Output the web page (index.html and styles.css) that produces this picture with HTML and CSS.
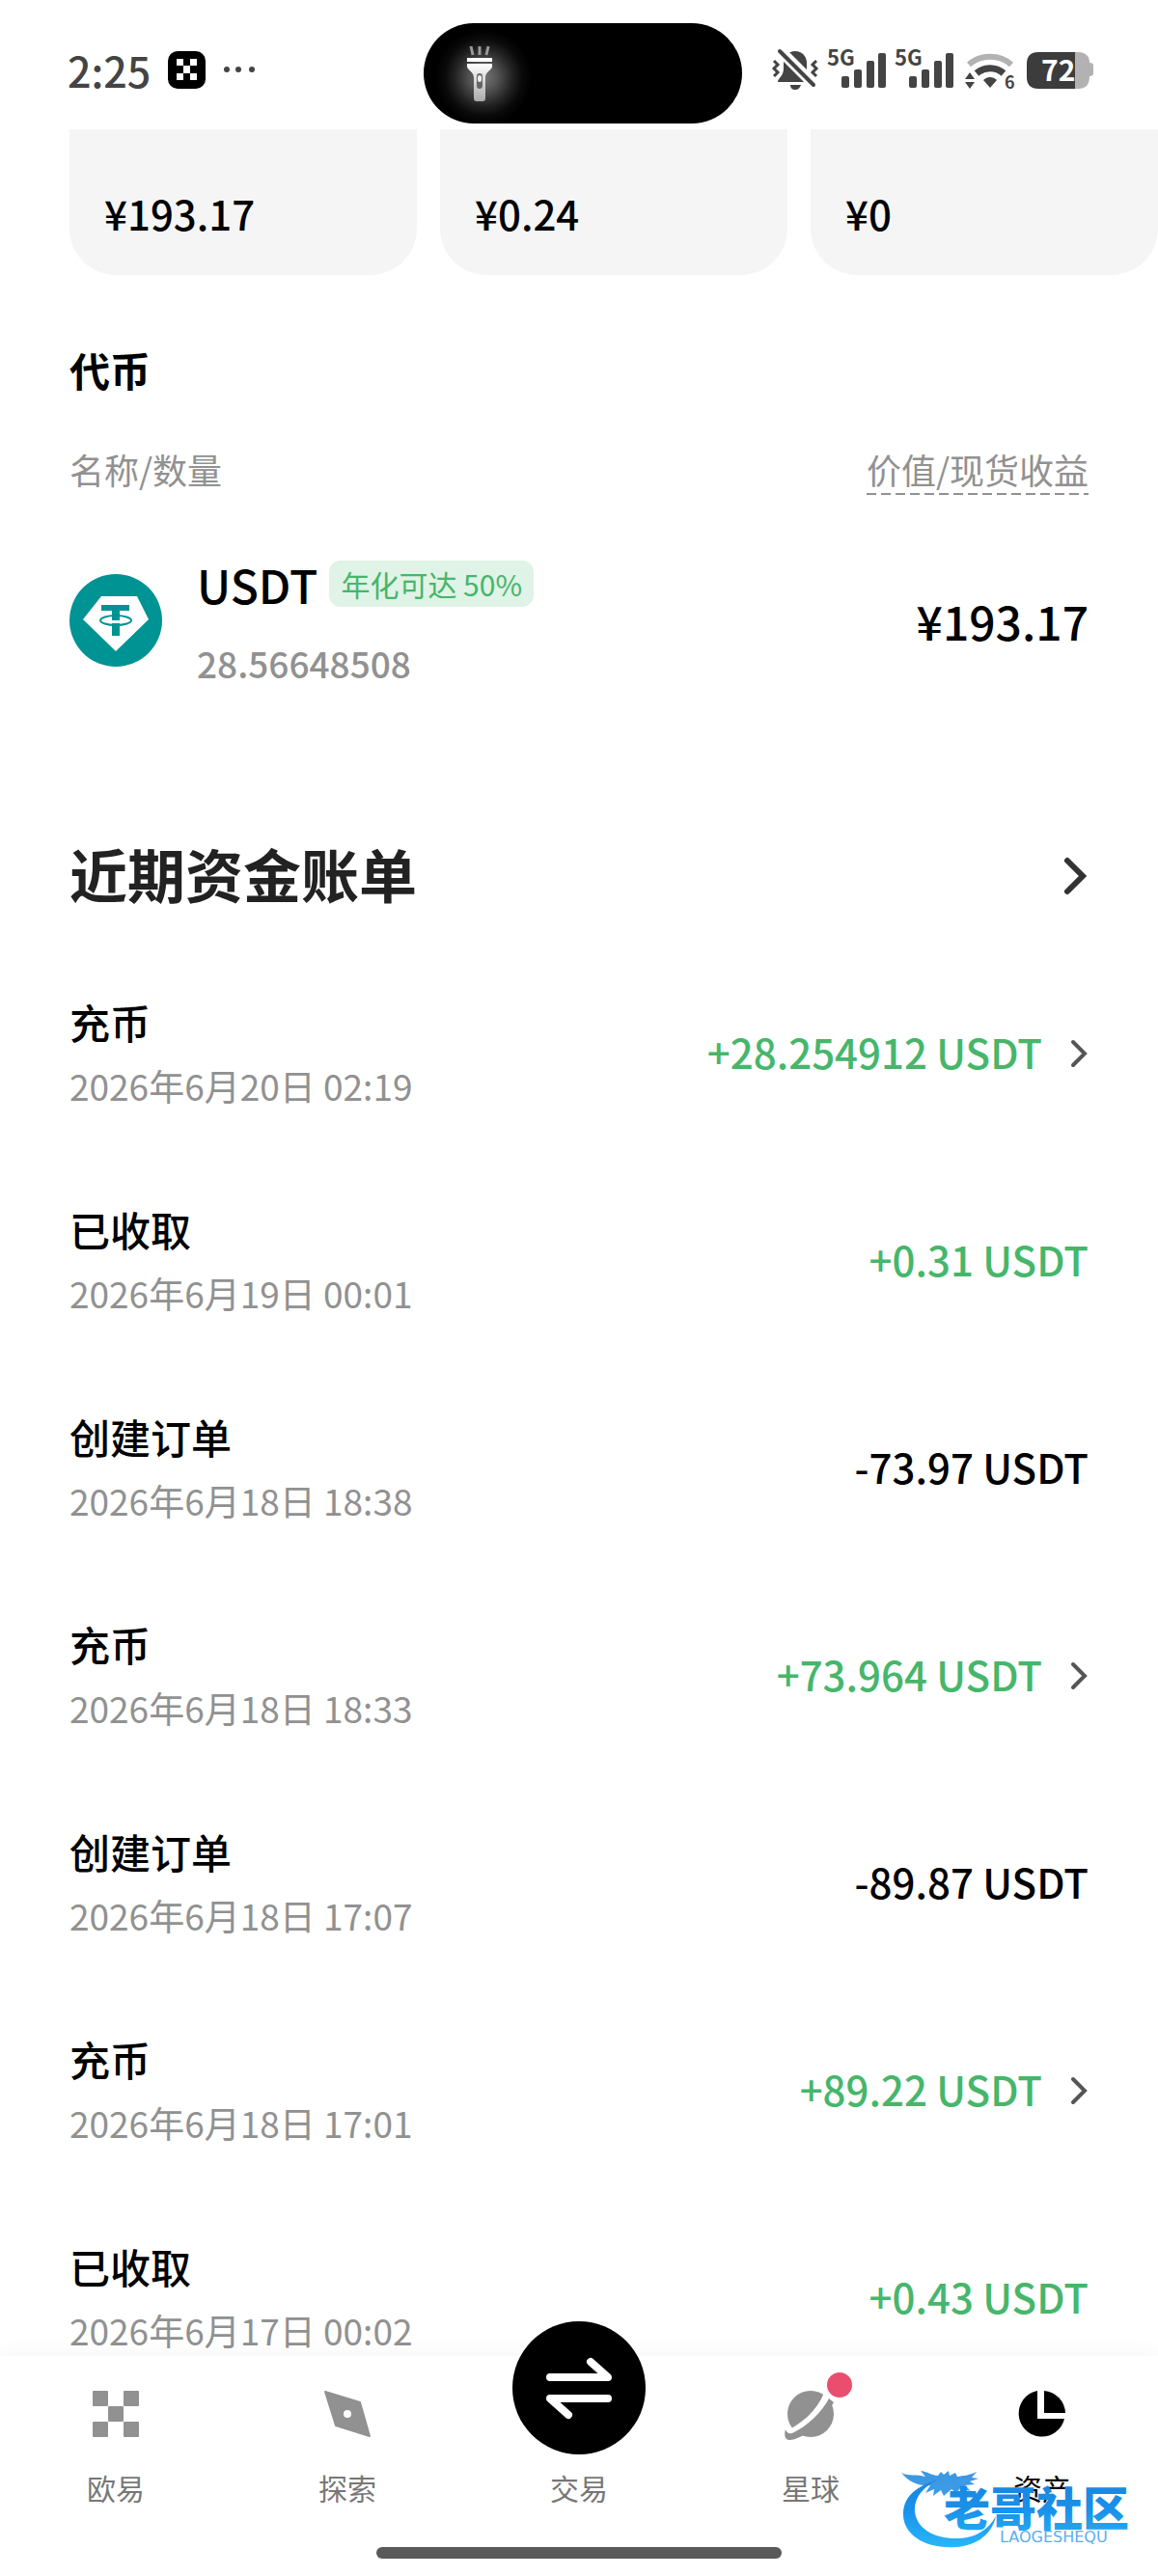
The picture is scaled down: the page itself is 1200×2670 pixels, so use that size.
FILE: index.html
```html
<!DOCTYPE html>
<html lang="zh-CN">
<head>
  <meta charset="UTF-8">
  <meta name="viewport" content="width=device-width, initial-scale=1">
  <title>资产</title>
  <link rel="stylesheet" href="styles.css">
</head>
<body>
  <div class="app">

    <header class="status-bar">
      <div class="status-left">
        <span class="time">2:25</span>
        <svg class="app-icon" width="39" height="39" viewBox="0 0 39 39">
          <rect width="39" height="39" rx="10" fill="#000"/>
          <path d="M9 8h7v7H9zM23 8h7v7h-7zM16 15h7v8h-7zM9 23h7v7H9zM23 23h7v7h-7z" fill="#fff"/>
        </svg>
        <svg width="34" height="8" viewBox="0 0 34 8" fill="#444">
          <circle cx="4" cy="4" r="3"/><circle cx="16" cy="4" r="3"/><circle cx="30" cy="4" r="3"/>
        </svg>
      </div>

      <div class="island">
        <svg width="26" height="60" viewBox="0 0 26 60">
          <defs>
            <linearGradient id="torch" x1="0" y1="0" x2="0" y2="1">
              <stop offset="0" stop-color="#fff"/><stop offset="1" stop-color="#aaa"/>
            </linearGradient>
          </defs>
          <path d="M4 2l2 9M13 2v9M22 2l-2 9" stroke="#999" stroke-width="3"/>
          <path d="M0 14h26v4H0z" fill="#fff"/>
          <path d="M0 20h26v3c0 3-7 6-7 11v22c0 2-1 3-3 3h-6c-2 0-3-1-3-3V34c0-5-7-8-7-11z" fill="url(#torch)"/>
          <rect x="10" y="30" width="6" height="16" rx="3" fill="#666"/>
          <rect x="11" y="32" width="4" height="7" rx="2" fill="#eee"/>
        </svg>
      </div>

      <div class="status-right">
        <svg width="48" height="42" viewBox="0 0 48 42">
          <path d="M24 2c7 0 12 5 12 12v6c0 7 6 10 6 14H6c0-4 6-6 6-14v-6C12 7 17 2 24 2z" fill="#444"/>
          <path d="M18 37h12c-1 3-3 5-6 5s-5-2-5-5z" fill="#444"/>
          <path d="M4 -3l42 42" stroke="#fff" stroke-width="11"/>
          <path d="M8 2l35 35" stroke="#444" stroke-width="4" stroke-linecap="round"/>
          <path d="M2 12l4 4-4 4 4 4-4 4M46 12l-4 4 4 4-4 4 4 4" fill="none" stroke="#444" stroke-width="3"/>
        </svg>
        <svg width="61" height="42" viewBox="0 0 61 42" fill="#444">
          <text class="net" x="0" y="17">5G</text>
          <rect x="15" y="28" width="8" height="12" rx="2"/>
          <rect x="28" y="21" width="8" height="19" rx="2"/>
          <rect x="41" y="12" width="8" height="28" rx="2"/>
          <rect x="53" y="4" width="8" height="36" rx="2"/>
        </svg>
        <svg width="61" height="42" viewBox="0 0 61 42" fill="#444">
          <text class="net" x="0" y="17">5G</text>
          <rect x="15" y="28" width="8" height="12" rx="2"/>
          <rect x="28" y="21" width="8" height="19" rx="2"/>
          <rect x="41" y="12" width="8" height="28" rx="2"/>
          <rect x="53" y="4" width="8" height="36" rx="2"/>
        </svg>
        <svg width="58" height="42" viewBox="0 0 58 42" fill="#444">
          <path d="M7 16c12-11 32-11 44 0" fill="none" stroke="#b2b2b2" stroke-width="6"/>
          <path d="M15 25c8-7 20-7 28 0" fill="none" stroke="#444" stroke-width="7"/>
          <path d="M22 32c4-4 10-4 14 0l-7 8z"/>
          <path d="M3 31l5-7 5 7zM3 34h10l-5 7z"/>
          <text class="wifi-gen" x="44" y="41">6</text>
        </svg>
        <svg width="69" height="42" viewBox="0 0 69 42">
          <path d="M50 3h3c8 0 12 4 12 11 3 0 4 1 4 3v8c0 2-1 3-4 3 0 9-4 13-12 13h-3z" fill="#b2b2b2"/>
          <path d="M12 3h38v38H12C4 41 0 37 0 29V15C0 7 4 3 12 3z" fill="#3c3c3c"/>
          <text class="charge" x="15" y="33">72</text>
        </svg>
      </div>
    </header>

    <main class="content">
      <section class="cards">
        <div class="card">
          <div class="card-label">资金账户</div>
          <div class="card-value">¥193.17</div>
        </div>
        <div class="card">
          <div class="card-label">交易账户</div>
          <div class="card-value">¥0.24</div>
        </div>
        <div class="card">
          <div class="card-label">赚币</div>
          <div class="card-value">¥0</div>
        </div>
      </section>

      <section class="tokens">
        <h2>代币</h2>
        <div class="columns">
          <span>名称/数量</span>
          <button type="button" class="sort">价值/现货收益</button>
        </div>
        <div class="token">
          <svg width="96" height="96" viewBox="0 0 96 96">
            <circle cx="48" cy="48" r="48" fill="#009393"/>
            <path d="M33 23h37l12 24-34 33-34-33z" fill="#fff"/>
            <path d="M33 32h29v6h-10v26h-8V38H33z" fill="#009393"/>
            <path d="M44 48h8v3h-8z" fill="#fff"/>
            <ellipse cx="48" cy="48" rx="16" ry="5" fill="none" stroke="#009393" stroke-width="2"/>
          </svg>
          <div class="token-info">
            <div class="token-name">USDT <span class="apy">年化可达 50%</span></div>
            <div class="token-amount">28.56648508</div>
          </div>
          <div class="token-value">¥193.17</div>
        </div>
      </section>

      <section class="bills">
        <a class="bills-head" href="#bills">
          <h1>近期资金账单</h1>
          <svg width="28" height="48" viewBox="0 0 28 48"><path d="M6 11l16 16L6 43" fill="none" stroke="#333" stroke-width="6" stroke-linecap="round"/></svg>
        </a>

        <ul class="bill-list" id="bills">
          <li class="bill">
            <div>
              <div class="bill-type">充币</div>
              <div class="bill-date">2026年6月20日 02:19</div>
            </div>
            <a class="amount in" href="#bill-1">+28.254912 USDT
              <svg width="20" height="34" viewBox="0 0 20 34"><path d="M4 7l12 12L4 31" fill="none" stroke="#555" stroke-width="4" stroke-linecap="round"/></svg>
            </a>
          </li>
          <li class="bill">
            <div>
              <div class="bill-type">已收取</div>
              <div class="bill-date">2026年6月19日 00:01</div>
            </div>
            <span class="amount in">+0.31 USDT</span>
          </li>
          <li class="bill">
            <div>
              <div class="bill-type">创建订单</div>
              <div class="bill-date">2026年6月18日 18:38</div>
            </div>
            <span class="amount">-73.97 USDT</span>
          </li>
          <li class="bill">
            <div>
              <div class="bill-type">充币</div>
              <div class="bill-date">2026年6月18日 18:33</div>
            </div>
            <a class="amount in" href="#bill-4">+73.964 USDT
              <svg width="20" height="34" viewBox="0 0 20 34"><path d="M4 7l12 12L4 31" fill="none" stroke="#555" stroke-width="4" stroke-linecap="round"/></svg>
            </a>
          </li>
          <li class="bill">
            <div>
              <div class="bill-type">创建订单</div>
              <div class="bill-date">2026年6月18日 17:07</div>
            </div>
            <span class="amount">-89.87 USDT</span>
          </li>
          <li class="bill">
            <div>
              <div class="bill-type">充币</div>
              <div class="bill-date">2026年6月18日 17:01</div>
            </div>
            <a class="amount in" href="#bill-6">+89.22 USDT
              <svg width="20" height="34" viewBox="0 0 20 34"><path d="M4 7l12 12L4 31" fill="none" stroke="#555" stroke-width="4" stroke-linecap="round"/></svg>
            </a>
          </li>
          <li class="bill">
            <div>
              <div class="bill-type">已收取</div>
              <div class="bill-date">2026年6月17日 00:02</div>
            </div>
            <span class="amount in">+0.43 USDT</span>
          </li>
        </ul>
      </section>
    </main>

    <footer class="bottom">
      <nav class="tabs">
        <a class="tab" href="#home">
          <svg width="48" height="48" viewBox="0 0 48 48" fill="#919191">
            <rect width="16" height="16" rx="1"/><rect x="32" width="16" height="16" rx="1"/>
            <rect x="16" y="16" width="16" height="16" rx="1"/>
            <rect y="32" width="16" height="16" rx="1"/><rect x="32" y="32" width="16" height="16" rx="1"/>
          </svg>
          欧易
        </a>
        <a class="tab" href="#explore">
          <svg width="48" height="48" viewBox="0 0 48 48">
            <path d="M1 1l36 11 10 35-35-11z" fill="#919191" stroke="#919191" stroke-width="2" stroke-linejoin="round"/>
            <circle cx="24" cy="24" r="4" fill="#fff"/>
          </svg>
          探索
        </a>
        <a class="tab tab-trade" href="#trade">
          <svg width="138" height="138" viewBox="0 0 138 138">
            <circle cx="69" cy="69" r="69" fill="#000"/>
            <path d="M39 58h60L81 42M99 80H39l19 17" fill="none" stroke="#fff" stroke-width="8" stroke-linecap="round" stroke-linejoin="round"/>
          </svg>
          交易
        </a>
        <a class="tab" href="#planet">
          <span class="icon-wrap">
            <svg width="48" height="48" viewBox="0 0 48 48">
              <circle cx="24" cy="24" r="24" fill="#919191"/>
              <path d="M46 6C36 28 20 42 5 48L-3 50 0 41C14 34 30 22 38 2z" fill="#fff"/>
              <path d="M-2 40c1 3 3 5 7 4C20 37 36 22 43 8l5 4C36 32 16 51 2 51c-4 0-6-4-4-11z" fill="#919191"/>
            </svg>
            <span class="dot"></span>
          </span>
          星球
        </a>
        <a class="tab active" href="#assets">
          <svg width="48" height="48" viewBox="0 0 48 48" fill="#000">
            <path d="M19 0v29h28A24 24 0 1 1 19 0z"/>
            <path d="M26 0a24 24 0 0 1 22 23H26z"/>
          </svg>
          资产
        </a>
      </nav>
      <div class="home-bar"></div>
    </footer>

    <svg class="watermark" width="252" height="92" viewBox="0 0 252 92">
      <defs>
        <linearGradient id="blue" gradientUnits="userSpaceOnUse" x1="0" y1="8" x2="0" y2="88">
          <stop offset="0" stop-color="#1b83dc"/><stop offset=".5" stop-color="#1890ea"/><stop offset="1" stop-color="#29b6f8"/>
        </linearGradient>
      </defs>
      <path d="M40 18C14 26 4 38 4 54c0 22 24 36 54 34 24-2 38-14 42-32-8 14-20 22-38 23-26 1-44-10-46-28-1-14 8-25 24-33z" fill="url(#blue)"/>
      <path d="M2 11c8 4 16 1 25 4l-5-6c8 1 12 5 18 5l3-4 3 3 5-4 1 5 6-3 2 4c6-1 12-1 20-5l-5 6 7 1-9 3 5 3-10 1 6 6-11-3-4 5-5-4-8 7-3-6-8 6 1-7-9 4 5-8c-10 1-21-2-30-13z" fill="url(#blue)" opacity=".85"/>
      <text class="mark-title" x="46" y="66">老哥社区</text>
      <text class="mark-sub" x="104" y="83">LAOGESHEQU</text>
    </svg>
  </div>
</body>
</html>
```
FILE: styles.css
```css
* {
  box-sizing: border-box;
}

body {
  margin: 0;
  background: #fff;
  color: #000;
  font-family: "Noto Sans CJK SC", sans-serif;
  font-size: 42px;
  font-weight: 500;
}

h1,
h2,
ul {
  margin: 0;
  padding: 0;
}

a {
  color: inherit;
  text-decoration: none;
}

svg {
  display: block;
  flex: none;
  overflow: visible;
}

.app {
  position: relative;
  display: flex;
  flex-direction: column;
  height: 100vh;
}

/* status bar */
.status-bar {
  display: grid;
  grid-template-columns: 439fr 330px 431fr;
  align-items: center;
  padding: 24px 0 6px;
}

.status-left,
.status-right {
  display: flex;
  align-items: center;
  padding-bottom: 8px;
}

.status-left {
  padding-left: 70px;
  gap: 18px;
}

.status-right {
  justify-content: flex-end;
  padding-right: 67px;
  gap: 9px;
}

.time {
  color: #444;
  font-size: 43px;
  line-height: 48px;
}

.island {
  display: flex;
  align-items: center;
  height: 104px;
  padding-left: 45px;
  border-radius: 52px;
  background: #000 radial-gradient(circle at 62px 56px, #777, #555 14px, #222 30px, #0a0a0a 40px, #000 50px);
}

.net {
  font-size: 22px;
  font-weight: 700;
}

.wifi-gen {
  font-size: 18px;
  font-weight: 700;
}

.charge {
  fill: #fff;
  font-size: 30px;
  font-weight: 700;
}

/* scrolling content */
.content {
  flex: 1;
  min-height: 0;
  overflow-y: auto;
  scrollbar-width: none;
}

.cards {
  display: flex;
  gap: 24px;
  margin-top: -45px;
  padding-left: 72px;
}

.card {
  flex: 1;
  padding: 0 36px 36px;
  border-radius: 48px;
  background: #f5f5f5;
}

.card-label {
  color: #555;
  font-size: 36px;
  font-weight: 400;
  line-height: 48px;
}

.card-value {
  margin-top: 56px;
  line-height: 56px;
}

.tokens,
.bills {
  padding: 0 72px;
}

.tokens h2 {
  margin-top: 70px;
  font-size: 42px;
  line-height: 56px;
}

.columns {
  display: flex;
  justify-content: space-between;
  margin-top: 52px;
  color: #919191;
  font-size: 36px;
  font-weight: 400;
  line-height: 46px;
}

.sort {
  padding: 0 0 4px;
  border: 0;
  background: repeating-linear-gradient(90deg, #919191 0 10px, #fff 10px 15px) bottom / 100% 2px no-repeat;
  color: inherit;
  font: inherit;
}

.token {
  display: flex;
  align-items: center;
  margin-top: 64px;
}

.token-info {
  flex: 1;
  padding-left: 36px;
}

.token-name {
  display: flex;
  align-items: center;
  gap: 12px;
  font-size: 48px;
  line-height: 56px;
}

.apy {
  padding: 0 12px;
  border-radius: 12px;
  background: #dff3e7;
  color: #46b66b;
  font-size: 30px;
  font-weight: 400;
  line-height: 48px;
}

.token-amount {
  margin-top: 32px;
  color: #919191;
  font-size: 37px;
  line-height: 44px;
}

.token-value {
  font-size: 48px;
  line-height: 56px;
}

.bills-head {
  display: flex;
  align-items: center;
  justify-content: space-between;
  margin-top: 154px;
}

.bills-head h1 {
  color: #222;
  font-size: 60px;
  line-height: 84px;
}

.bill-list {
  display: grid;
  gap: 97px;
  margin-top: 84px;
  list-style: none;
}

.bill {
  display: flex;
  align-items: center;
  justify-content: space-between;
}

.bill-type {
  line-height: 56px;
}

.bill-date {
  margin-top: 14px;
  color: #919191;
  font-size: 37px;
  font-weight: 400;
  line-height: 48px;
}

.amount {
  display: flex;
  align-items: center;
  gap: 28px;
  line-height: 56px;
}

.in {
  color: #46b66b;
}

/* bottom navigation */
.bottom {
  position: relative;
  padding-bottom: 18px;
  background: #fff;
  box-shadow: 0 -6px 18px rgba(0, 0, 0, 0.03);
}

.tabs {
  display: grid;
  grid-template-columns: repeat(5, 1fr);
  align-items: end;
}

.tab {
  display: flex;
  flex-direction: column;
  align-items: center;
  gap: 32px;
  padding-top: 36px;
  color: #777;
  font-size: 30px;
  font-weight: 400;
  line-height: 40px;
}

.tab-trade {
  gap: 14px;
  margin-top: -72px;
}

.tab.active {
  color: #000;
}

.icon-wrap {
  position: relative;
}

.dot {
  position: absolute;
  top: -22px;
  right: -22px;
  width: 32px;
  height: 32px;
  border: 3px solid #fff;
  border-radius: 50%;
  background: #ea4d6d;
}

.home-bar {
  width: 35%;
  height: 12px;
  margin: 42px auto 0;
  border-radius: 6px;
  background: #595959;
}

.watermark {
  position: absolute;
  right: 16px;
  bottom: 26px;
}

.mark-title {
  fill: url(#blue);
  font-size: 48px;
  font-weight: 900;
}

.mark-sub {
  fill: #5aaef0;
  font-family: "DejaVu Sans", sans-serif;
  font-size: 16px;
}
```
